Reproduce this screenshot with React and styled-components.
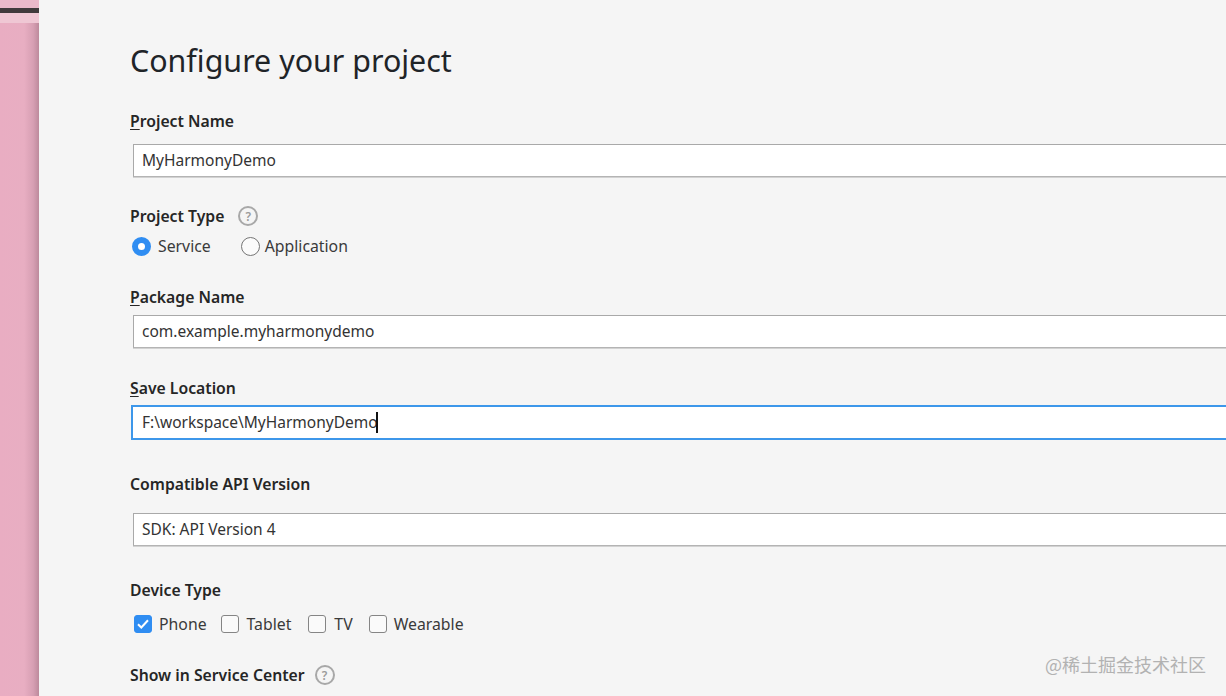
import React from 'react';
import styled, { createGlobalStyle } from 'styled-components';

const GlobalStyle = createGlobalStyle`
  html, body {
    margin: 0;
    padding: 0;
    background: #f5f5f5;
  }
  body {
    font-family: "Noto Sans", "Open Sans", "Liberation Sans", sans-serif;
    color: #2a2a2a;
  }
`;

const Page = styled.div`
  position: relative;
  width: 1226px;
  height: 696px;
  display: flex;
  overflow: hidden;
  background: #f5f5f5;
`;

const Sidebar = styled.div`
  width: 39px;
  flex: none;
  display: flex;
  flex-direction: column;
  background: linear-gradient(90deg, #e9adc2 0%, #e8aec2 62%, #d79fb3 85%, #bd8a9c 100%);
`;

const Strip = styled.div`
  height: ${(p) => p.$height}px;
  flex: none;
  background: ${(p) => p.$color};
`;

const Main = styled.div`
  flex: 1;
  min-width: 0;
  padding: 39px 0 0 91px;
`;

const Title = styled.h1`
  margin: 0 0 28px;
  font-size: 30.4px;
  font-weight: 400;
  line-height: 44px;
  color: #1f2428;
  white-space: nowrap;
`;

const LabelRow = styled.div`
  display: flex;
  align-items: center;
  gap: ${(p) => p.$gap || 13}px;
  height: 20px;
  margin-top: ${(p) => p.$top || 0}px;
`;

const Label = styled.span`
  font-size: 15.75px;
  font-weight: 600;
  line-height: 20px;
  color: #262626;
  white-space: nowrap;
`;

const Mnemonic = styled.span`
  text-decoration: underline;
  text-underline-offset: 2px;
`;

const HelpBadge = styled.span`
  width: 16px;
  height: 16px;
  border: 2px solid #a8a8a8;
  border-radius: 50%;
  display: flex;
  align-items: center;
  justify-content: center;
  font-size: 12px;
  font-weight: 600;
  color: #9a9a9a;
`;

const Input = styled.div`
  box-sizing: border-box;
  width: 1150px;
  height: 33px;
  margin: ${(p) => p.$top}px 0 0 3px;
  padding: 0 0 2px 8px;
  display: flex;
  align-items: center;
  background: #fff;
  border: 1px solid #b4b4b4;
  border-top-color: #a9a9a9;
  border-left-color: #a9a9a9;
  box-shadow: 0 1px 0 #d2d2d2;
  font-size: 15.5px;
  color: #333;
  white-space: nowrap;
`;

const FocusedInput = styled(Input)`
  height: 35px;
  margin-left: 1px;
  padding: 0 0 1px 9px;
  border: 2px solid #3d97ea;
  box-shadow: none;
`;

const Caret = styled.span`
  width: 2px;
  height: 21px;
  margin-left: -2px;
  background: #111;
`;

const RadioRow = styled.div`
  display: flex;
  align-items: center;
  height: 20px;
  margin: 10px 0 0 2px;
`;

const RadioDot = styled.span`
  box-sizing: border-box;
  width: 19px;
  height: 19px;
  border-radius: 50%;
  flex: none;
  background: ${(p) => (p.$checked ? '#fff' : '#fbfbfb')};
  border: ${(p) => (p.$checked ? '6px solid #2f8df2' : '1px solid #757575')};
`;

const OptionText = styled.span`
  margin: 0 ${(p) => p.$after || 0}px 0 ${(p) => p.$before}px;
  font-size: 15.8px;
  line-height: 20px;
  color: #3a3a3a;
  white-space: nowrap;
`;

const CheckRow = styled.div`
  display: flex;
  align-items: center;
  height: 20px;
  margin: 14px 0 0 4px;
`;

const CheckBox = styled.span`
  box-sizing: border-box;
  width: 18px;
  height: 18px;
  flex: none;
  display: flex;
  align-items: center;
  justify-content: center;
  border-radius: 3px;
  background: ${(p) => (p.$checked ? '#2f8df2' : '#fafafa')};
  border: 1px solid ${(p) => (p.$checked ? '#2f8df2' : '#858585')};
`;

const Watermark = styled.span`
  position: absolute;
  right: 20px;
  top: 652px;
  font-family: "Noto Sans CJK SC", "Noto Sans", sans-serif;
  font-size: 18px;
  line-height: 24px;
  color: #b2b2b2;
  white-space: nowrap;
`;

const CheckMark = () => (
  <svg width="12" height="10" viewBox="0 0 12 10" fill="none">
    <path d="M1 5.2 4.3 8.5 11 1.3" stroke="#fff" strokeWidth="2" />
  </svg>
);

const App = () => {
  return (
    <Page>
      <GlobalStyle />
      <Sidebar>
        <Strip $height={8} $color="#eab9ca" />
        <Strip $height={5} $color="#403a3c" />
        <Strip $height={10} $color="#efc7d4" />
      </Sidebar>
      <Main>
        <Title>Configure your project</Title>

        <LabelRow>
          <Label>
            <Mnemonic>P</Mnemonic>roject Name
          </Label>
        </LabelRow>
        <Input $top={13}>MyHarmonyDemo</Input>

        <LabelRow $top={29} $gap={14}>
          <Label>Project Type</Label>
          <HelpBadge>?</HelpBadge>
        </LabelRow>
        <RadioRow>
          <RadioDot $checked />
          <OptionText $before={7} $after={30}>Service</OptionText>
          <RadioDot />
          <OptionText $before={5}>Application</OptionText>
        </RadioRow>

        <LabelRow $top={31}>
          <Label>
            <Mnemonic>P</Mnemonic>ackage Name
          </Label>
        </LabelRow>
        <Input $top={8}>com.example.myharmonydemo</Input>

        <LabelRow $top={30}>
          <Label>
            <Mnemonic>S</Mnemonic>ave Location
          </Label>
        </LabelRow>
        <FocusedInput $top={7}>
          F:\workspace\MyHarmonyDemo
          <Caret />
        </FocusedInput>

        <LabelRow $top={34}>
          <Label>Compatible API Version</Label>
        </LabelRow>
        <Input $top={19}>SDK: API Version 4</Input>

        <LabelRow $top={34}>
          <Label>Device Type</Label>
        </LabelRow>
        <CheckRow>
          <CheckBox $checked>
            <CheckMark />
          </CheckBox>
          <OptionText $before={7} $after={14}>Phone</OptionText>
          <CheckBox />
          <OptionText $before={8} $after={17}>Tablet</OptionText>
          <CheckBox />
          <OptionText $before={8} $after={16}>TV</OptionText>
          <CheckBox />
          <OptionText $before={7}>Wearable</OptionText>
        </CheckRow>

        <LabelRow $top={31} $gap={10}>
          <Label>Show in Service Center</Label>
          <HelpBadge>?</HelpBadge>
        </LabelRow>
      </Main>
      <Watermark>@稀土掘金技术社区</Watermark>
    </Page>
  );
};

export default App;
